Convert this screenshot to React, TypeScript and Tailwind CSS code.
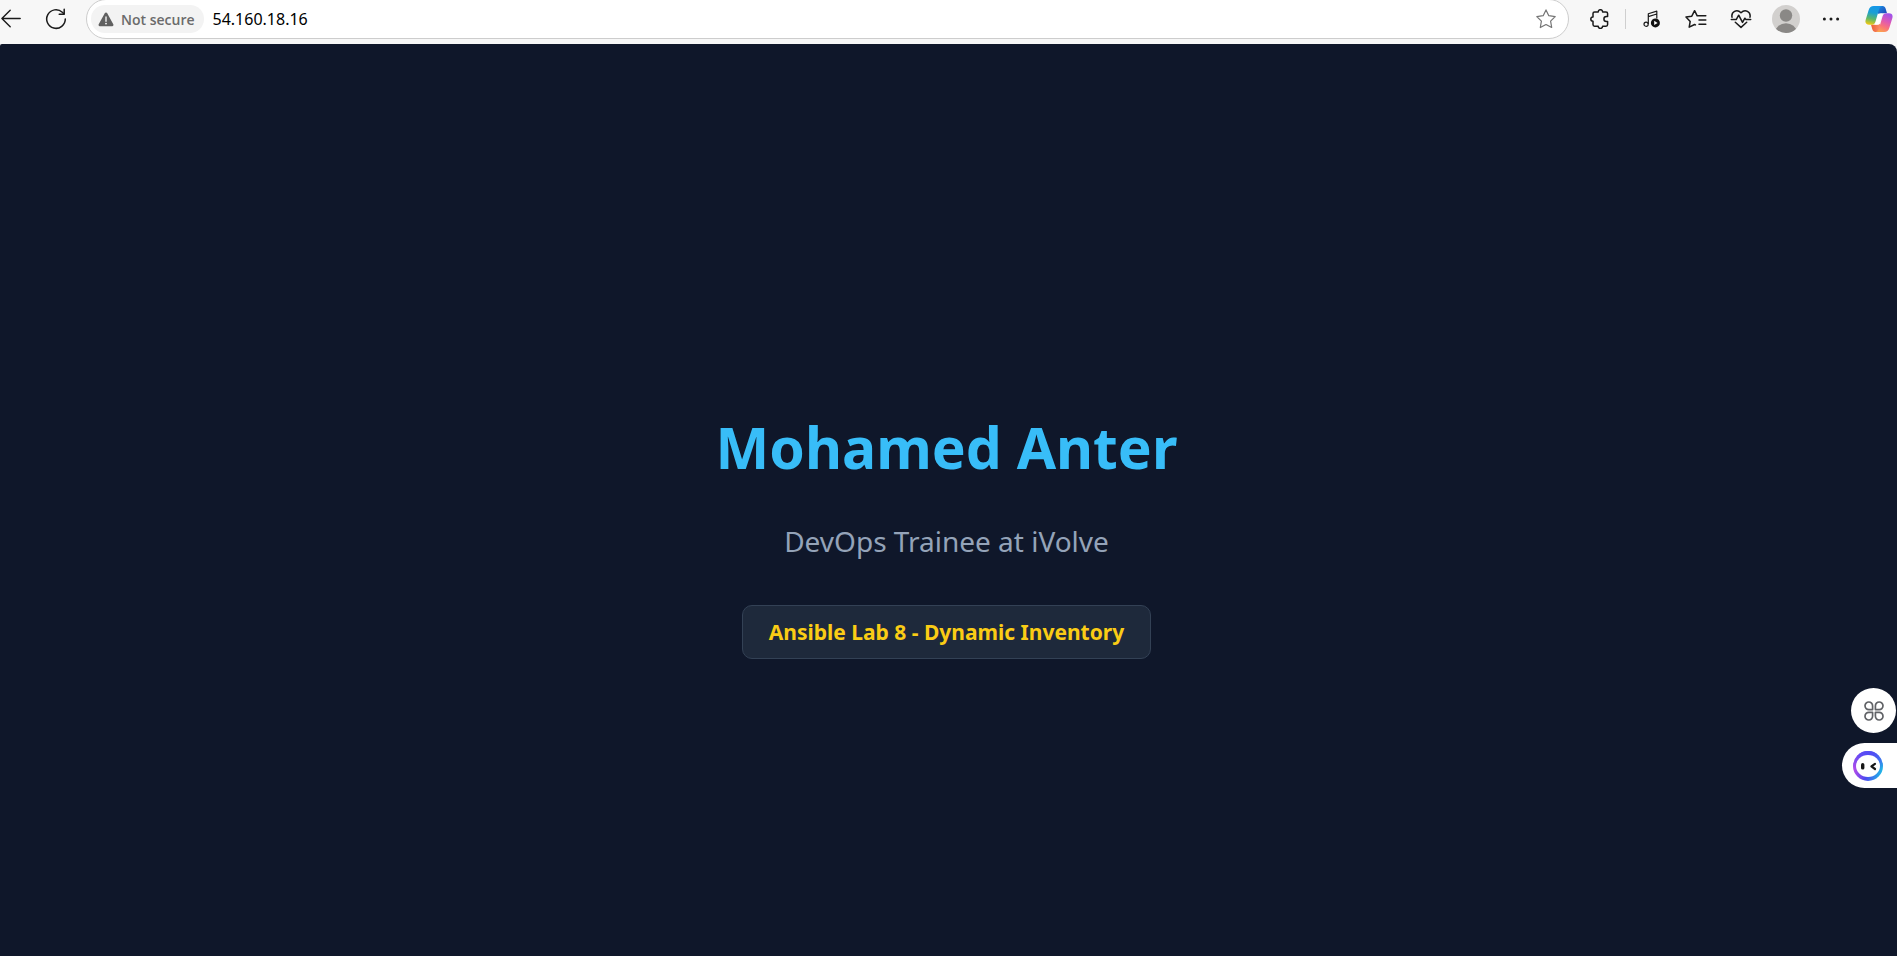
import React from "react";

function BackIcon() {
  return (
    <svg width="21" height="20" viewBox="0 0 21 20" fill="none" stroke="#1b1b1b" strokeWidth="1.4" strokeLinecap="round" strokeLinejoin="round">
      <path d="M20.2 9.5H1.9M10.2 1.2 1.9 9.5l8.3 8.3" />
    </svg>
  );
}

function ReloadIcon() {
  return (
    <svg width="22" height="22" viewBox="0 0 22 22" fill="none" stroke="#1b1b1b" strokeWidth="1.5" strokeLinecap="round" strokeLinejoin="round">
      <path d="M20.3 11a9.3 9.3 0 1 1-3-6.8l1.6 1.6" />
      <path d="M19.2 1.3v4.9h-5" />
    </svg>
  );
}

function WarningIcon() {
  return (
    <svg width="16" height="15" viewBox="0 0 16 15">
      <path d="M6.9 1.1a1.25 1.25 0 0 1 2.2 0l6.2 11.2a1.25 1.25 0 0 1-1.1 1.9H1.8a1.25 1.25 0 0 1-1.1-1.9z" fill="#606060" />
      <path d="M8 5v4.2" stroke="#f3f3f3" strokeWidth="1.4" strokeLinecap="round" />
      <circle cx="8" cy="11.6" r="0.95" fill="#f3f3f3" />
    </svg>
  );
}

function StarIcon() {
  return (
    <svg width="20" height="20" viewBox="0 0 20 20" fill="none" stroke="#757575" strokeWidth="1.2" strokeLinejoin="round">
      <path d="m10 .9 2.8 5.8 6.4.9-4.6 4.5 1.1 6.4L10 15.5l-5.7 3 1.1-6.4L.8 7.6l6.4-.9z" />
    </svg>
  );
}

function ExtensionsIcon() {
  return (
    <svg width="20" height="20" viewBox="0 0 20 20" fill="none" stroke="#1b1b1b" strokeWidth="1.5" strokeLinejoin="round">
      <path d="M4.6 2.9h3.6a2.2 2.2 0 0 1 4.4 0H16c.9 0 1.6.7 1.6 1.6v3h-1.2a2.5 2.5 0 0 0 0 5h1.2v3.1c0 .9-.7 1.6-1.6 1.6h-3.4a2.2 2.2 0 0 1-4.4 0H4.6c-.9 0-1.6-.7-1.6-1.6v-3.3a2.2 2.2 0 0 1 0-4.4V4.5c0-.9.7-1.6 1.6-1.6z" />
    </svg>
  );
}

function MusicIcon() {
  return (
    <svg width="18" height="18" viewBox="0 0 18 18" fill="none">
      <path d="M5.3 14V3.7l8.5-2.6v7.3M5.3 6.6l8.5-2.6" stroke="#1b1b1b" strokeWidth="1.2" strokeLinejoin="round" />
      <circle cx="3.1" cy="14.2" r="2.1" stroke="#1b1b1b" strokeWidth="1.2" />
      <circle cx="12.4" cy="12.9" r="4.5" fill="#111" />
      <path d="m11.2 10.8 3.4 2.1-3.4 2.1z" fill="#fff" />
    </svg>
  );
}

function FavoritesIcon() {
  return (
    <svg width="22" height="20" viewBox="0 0 22 20" fill="none" stroke="#1b1b1b" strokeWidth="1.5" strokeLinecap="round" strokeLinejoin="round">
      <path d="M10.4 15.9 9.6 15.5 4.2 18.2l1-5.8L1 8l5.8-.8L9.6 1.7l2.6 5.1h8.6M14 11h6.8M14 15.2h6.8" />
    </svg>
  );
}

function HeartIcon() {
  return (
    <svg width="22" height="20" viewBox="0 0 22 20" fill="none" stroke="#1b1b1b" strokeWidth="1.5" strokeLinecap="round" strokeLinejoin="round">
      <path d="M2 8.2C1 3 6.8-.6 11 3.8 15.2-.6 21 3 20 8.2" />
      <path d="M1.3 10.6h4.9l2.5-4.4 3.8 7.2 2.4-4.2 1.1 1.4h4.7" />
      <path d="m5.3 13.2 5.7 5.2 5.7-5.2" />
    </svg>
  );
}

function AvatarIcon() {
  return (
    <svg width="28" height="28" viewBox="0 0 28 28">
      <defs>
        <clipPath id="avatar-clip">
          <circle cx="14" cy="14" r="14" />
        </clipPath>
      </defs>
      <g clipPath="url(#avatar-clip)">
        <rect width="28" height="28" fill="#d2d0ce" />
        <circle cx="14" cy="10.5" r="6.2" fill="#8a8886" />
        <ellipse cx="14" cy="26.8" rx="10.5" ry="8.6" fill="#8a8886" />
      </g>
    </svg>
  );
}

function MoreIcon() {
  return (
    <svg width="18" height="4" viewBox="0 0 18 4" fill="#1b1b1b">
      <circle cx="2.4" cy="2" r="1.5" />
      <circle cx="9" cy="2" r="1.5" />
      <circle cx="15.6" cy="2" r="1.5" />
    </svg>
  );
}

function CopilotIcon() {
  return (
    <svg width="28" height="28" viewBox="0 0 28 28">
      <defs>
        <linearGradient id="cp-left" x1="0.5" y1="0" x2="0.3" y2="1">
          <stop offset="0" stopColor="#1597e8" />
          <stop offset="0.35" stopColor="#1a9fd4" />
          <stop offset="0.68" stopColor="#5cb86a" />
          <stop offset="1" stopColor="#f2c811" />
        </linearGradient>
        <linearGradient id="cp-right" x1="0.7" y1="0" x2="0.3" y2="1">
          <stop offset="0" stopColor="#a052ea" />
          <stop offset="0.4" stopColor="#dd58b5" />
          <stop offset="0.7" stopColor="#f9727b" />
          <stop offset="1" stopColor="#fba34f" />
        </linearGradient>
        <linearGradient id="cp-top" x1="0" y1="0" x2="1" y2="1">
          <stop offset="0" stopColor="#1d8be2" />
          <stop offset="1" stopColor="#1b45b5" />
        </linearGradient>
        <linearGradient id="cp-bottom" x1="0" y1="0" x2="1" y2="0">
          <stop offset="0" stopColor="#ed5f35" />
          <stop offset="1" stopColor="#fa8b67" />
        </linearGradient>
      </defs>
      <path d="M13 1h4.6c1.6 0 2.5 1 3 2.5L22 8.2h-3.6c-1.4 0-2.4-.2-3.4.2l-2 .6z" fill="url(#cp-top)" />
      <path d="M15 27h-4.6c-1.6 0-2.5-1-3-2.5L6 19.8h3.6c1.4 0 2.4.2 3.4-.2l2-.6z" fill="url(#cp-bottom)" />
      <path d="M8.8 1h8.4c-1.7.4-2.6 1.6-3.1 3.2l-3.6 12.2c-.7 2.4-1.8 3.4-4.2 3.4H4.2c-3.2 0-4.4-2-3.5-5L3.6 5.3C4.6 2.3 6 1 8.8 1z" fill="url(#cp-left)" />
      <path d="M19.2 27h-8.4c1.7-.4 2.6-1.6 3.1-3.2l3.6-12.2c.7-2.4 1.8-3.4 4.2-3.4h2.1c3.2 0 4.4 2 3.5 5l-2.9 9.5c-1 3-2.4 4.3-5.2 4.3z" fill="url(#cp-right)" />
      <path d="M13.3 8.8h4.1c-.4.6-.7 1.4-1 2.4l-2.5 8.2H9.8c.5-.6.9-1.4 1.2-2.4z" fill="#fff" />
    </svg>
  );
}

function AppsIcon() {
  return (
    <svg width="20" height="20" viewBox="0 0 20 20" fill="none" stroke="#606266" strokeWidth="1.7" strokeLinejoin="round">
      <path d="M8.6 8.6H4.9A3.8 3.8 0 1 1 8.6 4.9z" />
      <path d="M11.4 8.6h3.7a3.8 3.8 0 1 0-3.7-3.7z" />
      <path d="M8.6 11.4H4.9a3.8 3.8 0 1 0 3.7 3.7z" />
      <path d="M11.4 11.4h3.7a3.8 3.8 0 1 1-3.7 3.7z" />
    </svg>
  );
}

function AssistantIcon() {
  return (
    <svg width="30" height="30" viewBox="0 0 30 30">
      <defs>
        <linearGradient id="as-ring" x1="0.05" y1="0.6" x2="0.95" y2="0.75">
          <stop offset="0" stopColor="#b14cea" />
          <stop offset="0.45" stopColor="#4b49f0" />
          <stop offset="1" stopColor="#20b5e6" />
        </linearGradient>
        <linearGradient id="as-top" x1="0" y1="0" x2="0" y2="1">
          <stop offset="0" stopColor="#544cf5" />
          <stop offset="0.6" stopColor="#544cf5" stopOpacity="0" />
        </linearGradient>
      </defs>
      <circle cx="15" cy="15" r="15" fill="url(#as-ring)" />
      <circle cx="15" cy="15" r="15" fill="url(#as-top)" />
      <ellipse cx="15" cy="15" rx="12" ry="11" fill="#fff" />
      <rect x="8" y="12" width="3.4" height="6.6" rx="1.7" fill="#171717" />
      <path d="m22 12.8-3.6 2.6 3.6 2.6" fill="none" stroke="#171717" strokeWidth="2.2" strokeLinecap="round" strokeLinejoin="round" />
    </svg>
  );
}

function Toolbar() {
  return (
    <header className="flex h-11 shrink-0 items-start bg-[#f7f7f7] pr-1">
      <div className="flex h-[38px] items-center">
        <button aria-label="Back" className="mr-6 flex"><BackIcon /></button>
        <button aria-label="Refresh" className="mr-[19px] flex"><ReloadIcon /></button>
      </div>
      <div className="-mt-px flex h-10 min-w-0 flex-1 items-center rounded-full border border-[#cdcdcd] bg-white pl-1 pr-3">
        <button className="flex h-7 shrink-0 items-center gap-[7px] rounded-full bg-[#f3f3f3] pl-[7px] pr-[9px] font-['Open_Sans','Noto_Sans',sans-serif] text-[14px] font-semibold text-[#6b6b6b]">
          <WarningIcon />
          Not secure
        </button>
        <input
          aria-label="Address"
          defaultValue="54.160.18.16"
          className="ml-[9px] min-w-0 flex-1 bg-transparent text-[16px] text-black outline-none"
        />
        <button aria-label="Add to favorites" className="flex"><StarIcon /></button>
      </div>
      <div className="flex h-[38px] items-center">
        <button aria-label="Extensions" className="ml-[21px] flex"><ExtensionsIcon /></button>
        <div className="ml-[15px] h-5 w-px bg-[#cfcfcf]" />
        <button aria-label="Media controls" className="ml-[17px] flex"><MusicIcon /></button>
        <button aria-label="Favorites" className="ml-6 flex"><FavoritesIcon /></button>
        <button aria-label="Browser essentials" className="ml-[23px] flex"><HeartIcon /></button>
        <button aria-label="Profile" className="ml-5 flex"><AvatarIcon /></button>
        <button aria-label="Settings and more" className="ml-[22px] flex"><MoreIcon /></button>
        <button aria-label="Copilot" className="ml-[25px] flex"><CopilotIcon /></button>
      </div>
    </header>
  );
}

export default function App() {
  return (
    <div className="relative flex min-h-screen flex-col bg-[#f7f7f7] font-['Noto_Sans','Open_Sans',sans-serif]">
      <Toolbar />
      <main className="flex flex-1 flex-col items-center justify-center rounded-tl-xs rounded-tr-lg bg-[#0f172a] pr-1 pt-[66px]">
        <h1 className="text-[57px] font-bold leading-20 text-[#38bdf8]">Mohamed Anter</h1>
        <p className="mt-[34px] text-[28px] leading-10 text-[#94a3b8]">DevOps Trainee at iVolve</p>
        <div className="mt-11 rounded-[10px] border border-[#334155] bg-[#1e293b] px-[26px] py-3 text-[21px] font-bold leading-7 text-[#facc15]">
          Ansible Lab 8 - Dynamic Inventory
        </div>
      </main>
      <aside className="absolute right-0 top-[688px] flex flex-col items-end gap-[10px]">
        <button aria-label="Apps" className="mr-px flex size-[45px] items-center justify-center rounded-full bg-white">
          <AppsIcon />
        </button>
        <button aria-label="Assistant" className="flex h-[45px] w-[55px] items-center rounded-l-full bg-white pl-[11px]">
          <AssistantIcon />
        </button>
      </aside>
    </div>
  );
}
